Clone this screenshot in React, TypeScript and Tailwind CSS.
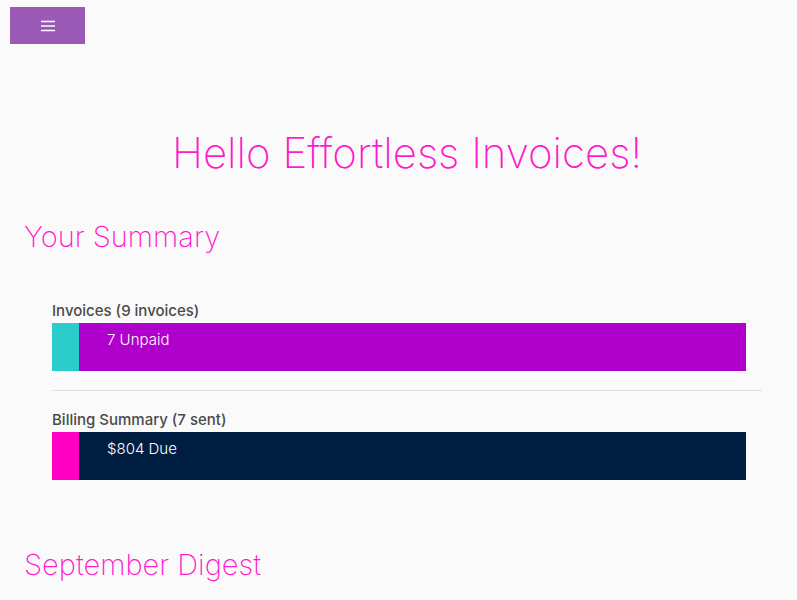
import React from "react";

function MenuIcon() {
  return (
    <svg width="16" height="12" viewBox="0 0 16 12" fill="none">
      <path d="M1 1.5h14M1 6h14M1 10.5h14" stroke="white" strokeWidth="1.4" />
    </svg>
  );
}

function SummaryBar({
  label,
  text,
  accent,
  fill,
}: {
  label: string;
  text: string;
  accent: string;
  fill: string;
}) {
  return (
    <div>
      <div className="text-[15px] font-medium text-[#4a4a4a] leading-none mb-[5px]">{label}</div>
      <div className={`flex h-[48px] w-[694px] ${fill}`}>
        <div className={`w-[27px] h-full ${accent}`} />
        <div className="pl-[28px] pt-[8px] text-[15px] font-light text-white leading-tight">{text}</div>
      </div>
    </div>
  );
}

export default function App() {
  return (
    <div className="min-h-screen bg-[#fafafa] font-['Inter',sans-serif]">
      {/* Header */}
      <div className="pt-[7px] pl-[10px]">
        <button className="w-[75px] h-[37px] bg-[#9b59b6] flex items-center justify-center">
          <MenuIcon />
        </button>
      </div>

      <h1 className="mt-[88px] pl-[17px] text-center text-[42px] font-extralight text-[#ff1acb] leading-none">
        Hello Effortless Invoices!
      </h1>

      <h2 className="mt-[48px] pl-[24px] text-[29px] font-extralight text-[#ff1acb] leading-none">
        Your Summary
      </h2>

      <div className="mt-[52px] pl-[52px] pr-[35px]">
        <SummaryBar label="Invoices (9 invoices)" text="7 Unpaid" accent="bg-[#2ccccc]" fill="bg-[#b000cc]" />
        <div className="mt-[19px] mb-[21px] h-px bg-[#e2e2e2]" />
        <SummaryBar label="Billing Summary (7 sent)" text="$804 Due" accent="bg-[#ff00c4]" fill="bg-[#001e42]" />
      </div>

      <h2 className="mt-[70px] pl-[24px] text-[29px] font-extralight text-[#ff1acb] leading-none">
        September Digest
      </h2>
    </div>
  );
}
